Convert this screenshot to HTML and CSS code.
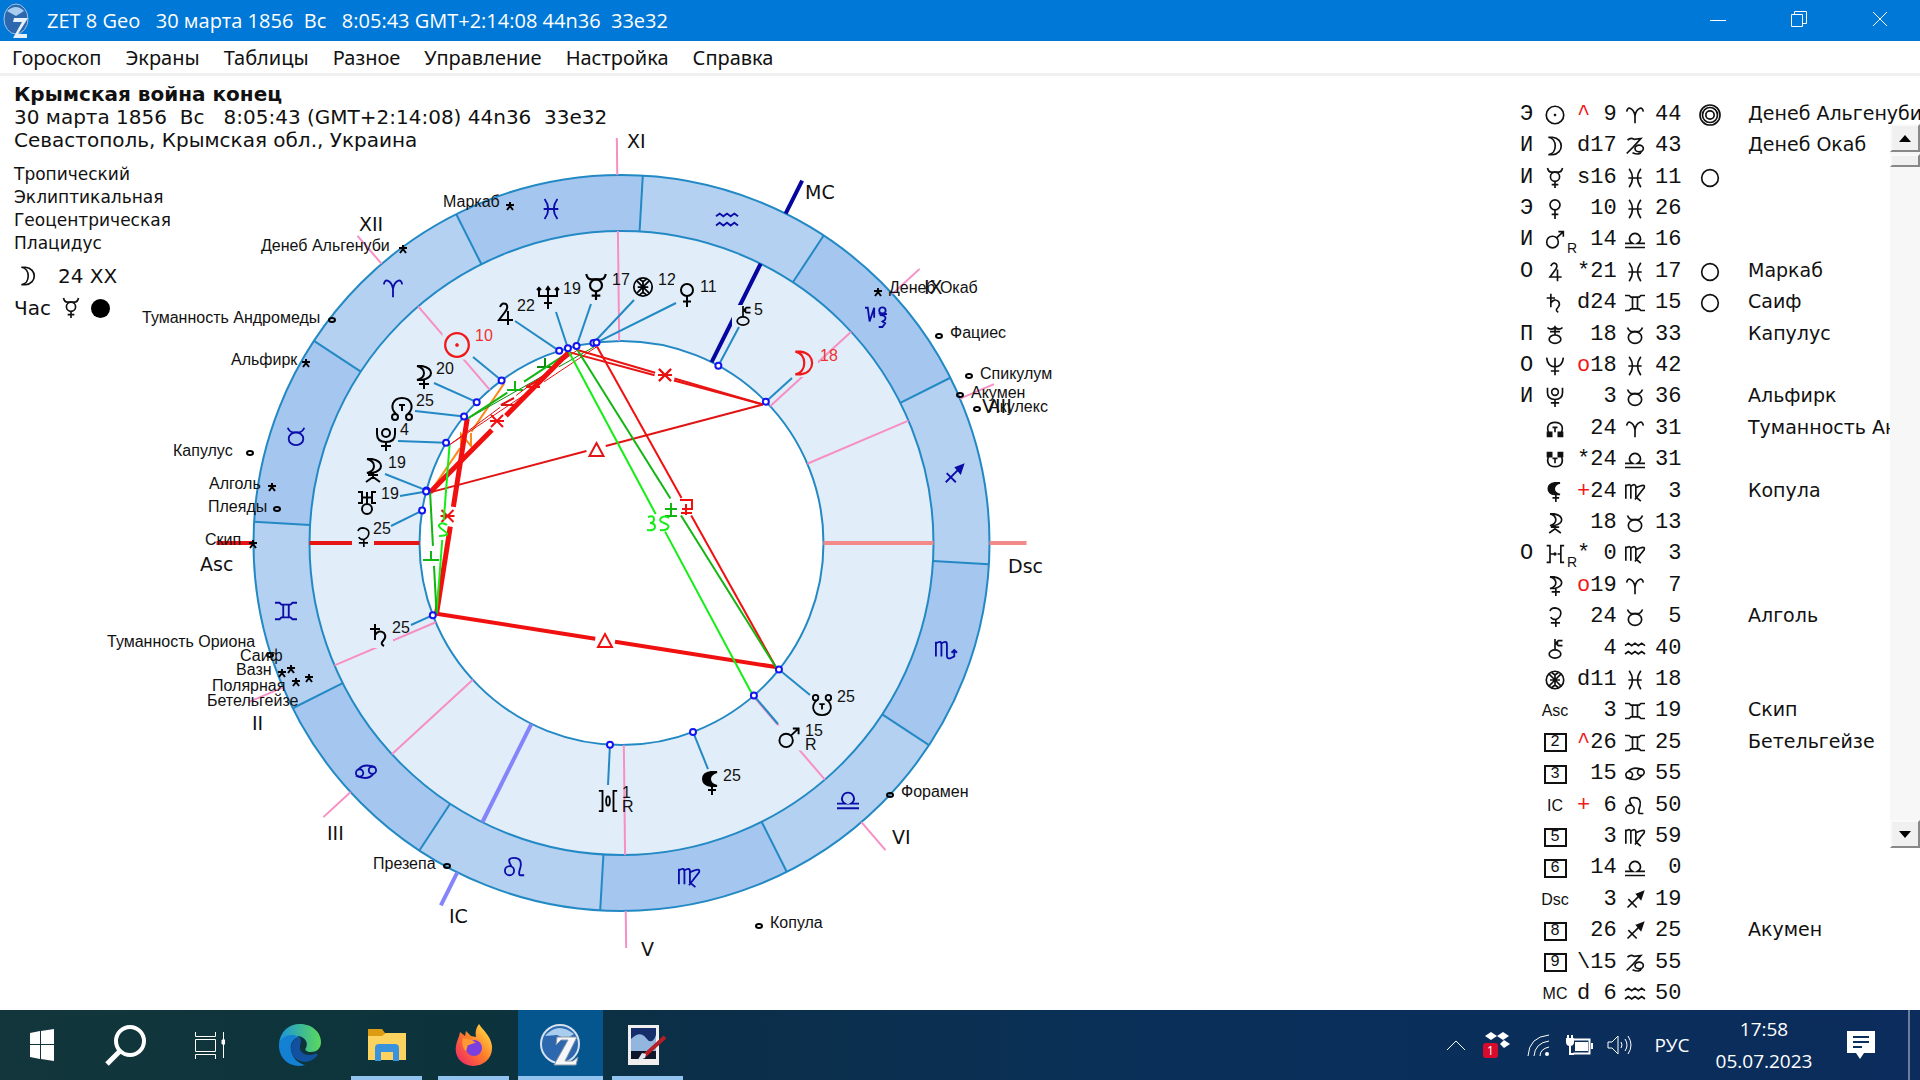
FILE: index.html
```html
<!DOCTYPE html>
<html lang="ru">
  <head>
    <meta charset="UTF-8" />
    <meta name="viewport" content="width=device-width, initial-scale=1.0" />
    <title>ZET 8 Geo</title>
    <link rel="stylesheet" href="styles.css">
  </head>
  <body>
    <!-- Glyphs used by the wheel and the table -->
    <svg class="sprite" aria-hidden="true">
      <symbol id="sun" viewBox="0 0 24 24"><circle cx="12" cy="12" r="10.5" /><path d="M12 10.5v3M10.5 12h3" /></symbol>
      <symbol id="moon" viewBox="0 0 24 24"><path d="M4 1.5h5C23 3 23 21 9 22.500H4C15 21 15 3 4 1.500z" /></symbol>
      <symbol id="mercury" viewBox="0 0 24 24"><path d="M3 0q1 5 5 5h8q4 0 5-5M12 16v8M8 20h8" /><circle cx="12" cy="10.500" r="5.500" /></symbol>
      <symbol id="venus" viewBox="0 0 24 24"><circle cx="12" cy="7" r="6" /><path d="M12 13v11M8 18.500h8" /></symbol>
      <symbol id="mars" viewBox="0 0 24 24"><circle cx="9" cy="14.500" r="7" /><path d="M14 9.500L22 2M16 2h6v6" /></symbol>
      <symbol id="jupiter" viewBox="0 0 24 24"><path d="M7 5q2-5 6-3 3 3-1 8l-6 8h14M15 9v14" /></symbol>
      <symbol id="saturn" viewBox="0 0 24 24"><path d="M7 1v16M2 6h10M7 12q4-6 9-2 3 4-1 8-3 3 1 5" /></symbol>
      <symbol id="uranus" viewBox="0 0 24 24"><path d="M3 1h4v11H3M21 1h-4v11h4M7 6.500h10M12 1v12" /><circle cx="12" cy="18" r="5" /></symbol>
      <symbol id="neptune" viewBox="0 0 24 24"><path d="M3 3v8h18V3M12 2v22M8 18h8M1 5l2-2 2 2M10 5l2-3 2 3M19 5l2-2 2 2" /></symbol>
      <symbol id="trident" viewBox="0 0 24 24"><path d="M2 2q1 11 10 11T22 2M12 2v21M7 18h10" /></symbol>
      <symbol id="ouranos" viewBox="0 0 24 24"><path d="M3 3q4 4 9 0 5 4 9 0M12 1v11M6 8h12" /><ellipse cx="12" cy="17" rx="7" ry="5" /></symbol>
      <symbol id="pluto" viewBox="0 0 24 24"><path d="M3 1v6q0 8 9 8t9-8V1M12 15v9M7 19h10" /><circle cx="12" cy="6" r="4" /></symbol>
      <symbol id="north" viewBox="0 0 24 24"><path d="M6 17C-1 10 3 1 12 1s13 9 6 16M9 8h6M12 8v6" /><circle cx="5" cy="20" r="3" /><circle cx="19" cy="20" r="3" /></symbol>
      <symbol id="south" viewBox="0 0 24 24"><path d="M6 7C-1 14 3 23 12 23s13-9 6-16M9 11h6M12 11v6" /><circle cx="5" cy="4" r="3" /><circle cx="19" cy="4" r="3" /></symbol>
      <symbol id="node-up" viewBox="0 0 24 24"><path d="M5 18C1 10 4 4 12 4s11 6 7 14M9 10h6M12 10v6" /><path class="solid" d="M3 16h5v5H3zM16 16h5v5h-5z" /></symbol>
      <symbol id="node-down" viewBox="0 0 24 24"><path d="M5 6C1 14 4 20 12 20s11-6 7-14M9 10h6M12 10v6" /><path class="solid" d="M3 3h5v5H3zM16 3h5v5h-5z" /></symbol>
      <symbol id="lilith" viewBox="0 0 24 24"><path class="solid" d="M18 1H12Q4 2 4 8t8 7h6Q11 13 11 8t7-7z" /><path d="M13 15v9M9 19h8" /></symbol>
      <symbol id="selena" viewBox="0 0 24 24"><path d="M6 1h5q9 2 9 7t-9 7H6q7-2 7-7T6 1M13 15v9M8 19h10" /></symbol>
      <symbol id="proserpina" viewBox="0 0 24 24"><path d="M6 1h5q9 2 9 7t-9 7H6q7-2 7-7T6 1M12 15v4M7 17h10M5 24l7-5 7 5" /></symbol>
      <symbol id="ceres" viewBox="0 0 24 24"><path d="M6 5q1-4 6-4 7 1 7 6 0 6-6 8-5 0-6-3M13 15v9M7 19h11" /></symbol>
      <symbol id="chiron" viewBox="0 0 24 24"><path d="M12 13V0M21 2h-5l-3 3 3 3h5M12 5h4" /><ellipse cx="12" cy="18" rx="7" ry="5" /></symbol>
      <symbol id="fortune" viewBox="0 0 24 24"><circle cx="12" cy="12" r="10.500" /><path d="M12 6v12M6 12h12M5 5l4 4 6 6 4 4M19 5l-4 4-6 6-4 4M8 3l4 3 4-3M8 21l4-3 4 3" /></symbol>
      <symbol id="vulcan" viewBox="0 0 24 24"><path d="M2 1h4v22H2M22 1h-4v22h4" /><ellipse cx="12" cy="12" rx="2" ry="5" /></symbol>
      <symbol id="hestia" viewBox="0 0 24 24"><path d="M2 2h4v20H2M6 12h5M15 12h4M23 2h-4v20h4" /><circle class="solid" cx="12" cy="12" r="1" /></symbol>

      <symbol id="aries" viewBox="0 0 24 24"><path d="M2 8q1-5 4-4 5 2 6 9v9M22 8q-1-5-4-4-5 2-6 9" /></symbol>
      <symbol id="taurus" viewBox="0 0 24 24"><path d="M3 3q2 5 6 5h6q4 0 6-5" /><ellipse cx="12" cy="15" rx="8" ry="7" /></symbol>
      <symbol id="gemini" viewBox="0 0 24 24"><path d="M0 3h5l2 2h10l2-2h5M0 21h5l2-2h10l2 2h5M9 5v14M15 5v14" /></symbol>
      <symbol id="cancer" viewBox="0 0 24 24"><circle cx="5" cy="13" r="4" /><circle cx="19" cy="10" r="4" /><path d="M4 9q6-7 18-2M20 14q-6 8-19 2" /></symbol>
      <symbol id="leo" viewBox="0 0 24 24"><circle cx="6" cy="16" r="5" /><path d="M8 11Q2 2 11 2t7 10q-3 9 0 9h4" /></symbol>
      <symbol id="virgo" viewBox="0 0 24 24"><path d="M1 3v17M1 5q6-4 6 1v14M7 5q6-4 6 1v12l6 5M13 7q12-6 10 0L12 21" /></symbol>
      <symbol id="libra" viewBox="0 0 24 24"><path d="M0 21h24M0 16h9q-5-3-3-8 2-4 6-4t6 4q2 5-3 8h9" /></symbol>
      <symbol id="scorpio" viewBox="0 0 24 24"><path d="M1 3v16M1 5q6-4 6 1v13M7 5q6-4 6 1v12q0 4 4 3l4-2v-7M18 15l3-3 3 3" /></symbol>
      <symbol id="sagittarius" viewBox="0 0 24 24"><path d="M3 21L20 4M4 11l10 10" /><path class="solid" d="M14 5l8-3-3 9z" /></symbol>
      <symbol id="capricorn" viewBox="0 0 24 24"><path d="M0 3h3l2 15L10 3v11M15 9l9 1M16 11q8 0 6 5l-3 2 3 2-3 4h-4" /><circle cx="19" cy="6" r="3.500" /></symbol>
      <symbol id="goat" viewBox="0 0 24 24"><path d="M3 5q4-4 8-1l8-1-9 10-8 8" /><ellipse cx="17" cy="15" rx="5" ry="4" /><path d="M9 20q9 4 11-2" /></symbol>
      <symbol id="aquarius" viewBox="0 0 24 24"><path d="M0 8l4-3 4 3 4-3 4 3 4-3 4 3M0 18l4-3 4 3 4-3 4 3 4-3 4 3" /></symbol>
      <symbol id="pisces" viewBox="0 0 24 24"><path d="M5 1q8 11 0 22M19 1q-8 11 0 22M4 12h16" /></symbol>
    </svg>

    <header class="titlebar">
      <svg class="app-icon" viewBox="0 0 28 36"><ellipse cx="14" cy="16" rx="12" ry="15" fill="#2d67ae" stroke="#9cc4ea" stroke-width="1" /><path d="M5 8q9-8 17 0l-8 5z" fill="#a9cdee" /><path d="M12 15h14L16 31h9v4H11l9-16h-9z" fill="#e8f0f8" /></svg>
      <h1>ZET 8 Geo   30 марта 1856  Вс   8:05:43 GMT+2:14:08 44n36  33e32</h1>
      <div class="window-buttons">
        <button aria-label="Свернуть"><svg viewBox="0 0 16 16"><path d="M0 9.500h16" /></svg></button>
        <button aria-label="Восстановить"><svg viewBox="0 0 16 16"><path d="M.5 3.500h11v12h-11zM3.500 3.500v-3h12v12h-4" /></svg></button>
        <button aria-label="Закрыть"><svg viewBox="0 0 16 16"><path d="M1 1l14 14M15 1L1 15" /></svg></button>
      </div>
    </header>

    <nav class="menu">
      <a href="#">Гороскоп</a>
      <a href="#">Экраны</a>
      <a href="#">Таблицы</a>
      <a href="#">Разное</a>
      <a href="#">Управление</a>
      <a href="#">Настройка</a>
      <a href="#">Справка</a>
    </nav>

    <main class="workspace">
      <section class="wheel">
        <svg id="chart" viewBox="0 76 1516 934" preserveAspectRatio="xMinYMin meet"></svg>
        <div class="info">
          <h2>Крымская война конец</h2>
          <p>30 марта 1856  Вс   8:05:43 (GMT+2:14:08) 44n36  33e32</p>
          <p>Севастополь, Крымская обл., Украина</p>
          <ul>
            <li>Тропический</li>
            <li>Эклиптикальная</li>
            <li>Геоцентрическая</li>
            <li>Плацидус</li>
          </ul>
          <div class="row"><svg class="glyph"><use href="#moon" /></svg><span class="day">24 XX</span></div>
          <div class="row"><span>Час</span><svg class="glyph"><use href="#mercury" /></svg><span class="dot"></span></div>
        </div>
      </section>

      <section class="positions">
        <table><tbody id="positions"></tbody></table>
        <div class="scrollbar">
          <button aria-label="Вверх"><span class="up"></span></button>
          <div class="thumb"></div>
          <button class="last" aria-label="Вниз"><span class="down"></span></button>
        </div>
      </section>
    </main>

    <footer class="taskbar">
      <div class="system">
        <button aria-label="Пуск"><svg width="26" height="34" viewBox="0 0 26 34" fill="#fff"><path d="M1 5l10-2v13H1zM12 3l13-2v15H12zM1 17h10v14L1 29zM12 17h13v16l-13-2z" /></svg></button>
        <button aria-label="Поиск"><svg width="42" height="42" viewBox="0 0 42 42" fill="none" stroke="#fff" stroke-width="4"><circle cx="25" cy="17" r="14" /><path d="M15 27L2 40" stroke-width="5" /></svg></button>
        <button aria-label="Представление задач"><svg width="30" height="30" viewBox="0 0 30 30" fill="none" stroke="#fff" stroke-width="1"><path d="M.5 2v4.500h20V2M.5 9.500h20v12H.5zM.5 29v-4.500h20V29M28.500 2v26" /><path d="M27 10h3v4h-3z" fill="#fff" /></svg></button>
      </div>
      <div class="apps">
        <button aria-label="Edge">
          <svg width="42" height="42" viewBox="0 0 42 42">
            <defs>
              <linearGradient id="edgeTop"><stop offset="0" stop-color="#1b94dc" /><stop offset="1" stop-color="#5bd95a" /></linearGradient>
            </defs>
            <path d="M0 20C1 7 10 0 21 0c13 0 21 9 21 18 0 7-5 10-10 10-4 0-7-2-5-4 3-6-2-12-9-12S2 14 0 20z" fill="url(#edgeTop)" />
            <path d="M0 20c3-9 13-11 20-7-7 2-9 8-8 13 1 7 6 13 14 15C12 45-1 35 0 20z" fill="#1480d4" />
            <path d="M20 13c-9 4-10 13-5 20 5 6 15 7 22 0 3-3 1-4-1-3-8 3-16-1-15-7 0-5 3-6-1-10z" fill="#12519f" />
          </svg>
        </button>
        <button class="open" aria-label="Проводник"><svg width="38" height="34" viewBox="0 0 38 34"><path d="M0 1h14l3 4h20v26H0z" fill="#dd9d12" /><path d="M0 8h14l4-3h20v27H0z" fill="#fbd35e" /><path d="M7 33V20q0-4 4-4h16q4 0 4 4v13h-6v-9H13v9z" fill="#3a92dc" /></svg></button>
        <button class="open" aria-label="Firefox">
          <svg width="38" height="42" viewBox="0 0 38 42">
            <defs>
              <linearGradient id="fox" x1="1" y1="0" x2="0" y2="1"><stop offset="0" stop-color="#fff04a" /><stop offset=".5" stop-color="#ff7a2a" /><stop offset="1" stop-color="#ee1c70" /></linearGradient>
            </defs>
            <path d="M24 0c3 5 12 12 13 22 1 12-8 20-19 20S-1 33 1 22C2 16 4 14 5 8l5 4 1-5 5 5 5 1c-1-5 0-9 3-13z" fill="url(#fox)" />
            <circle cx="19" cy="24" r="8" fill="#7b3fe0" />
            <path d="M8 14l9 2 4 3c-4 0-5 2-8 2l-2 6C7 24 7 18 8 14z" fill="#ff9a35" />
          </svg>
        </button>
        <button class="open active" aria-label="ZET 8"><svg width="42" height="42" viewBox="0 0 42 42"><circle cx="20" cy="20" r="19" fill="#2d67ae" stroke="#d5e2ee" stroke-width="2" /><path d="M5 12q13-15 29-2l-8 5-9-4z" fill="#a9cdee" /><path d="M17 13h20L25 37h8l5-4-2 8H14l14-25h-7l-5 5z" fill="#f5f7fa" stroke="#8795a5" stroke-width="1" /></svg></button>
        <button class="open" aria-label="Просмотр изображений"><svg width="42" height="42" viewBox="0 0 42 42"><path d="M1 1h31v40H1z" fill="#f1efed" /><path d="M4 4h25v31H4z" fill="#162f6c" /><path d="M4 15q9-9 15-1t10-3v16H4z" fill="#93b6df" /><path d="M4 27h25v8H4z" fill="#10162a" /><path d="M38 13L17 32" stroke="#b51f26" stroke-width="4" /><path d="M19 30l-4-1-5 8 8-3z" fill="#dfe5ee" /></svg></button>
      </div>

      <div class="tray">
        <button aria-label="Скрытые значки"><svg width="18" height="10" viewBox="0 0 18 10"><path d="M0 10l9-9 9 9" /></svg></button>
        <button class="cloud" aria-label="Dropbox"><svg width="26" height="26" viewBox="0 0 26 26"><path class="fill" d="M7 0l6 4-6 4-6-4zM19 0l6 4-6 4-6-4zM20 8l6 4-6 4-4-4z" /></svg><span class="count">1</span></button>
        <button aria-label="Сеть"><svg width="22" height="22" viewBox="0 0 22 22"><path d="M1 22Q2 3 22 1M7 22Q8 9 22 7M13 22Q13 15 22 13" /><circle class="fill" cx="20" cy="20" r="2" /></svg></button>
        <button aria-label="Питание"><svg width="28" height="22" viewBox="0 0 28 22"><path d="M8.500 5.500h16v14h-16M5 12v8h4" stroke-width="2" /><path class="fill" d="M10 8h13v9H10zM26 9h2v6h-2zM1 4h8v4q0 4-4 4T1 8zM2 1h2v4H2zM6 1h2v4H6z" /></svg></button>
        <button aria-label="Громкость"><svg width="26" height="22" viewBox="0 0 26 22"><path d="M1 8h4l6-6v18l-6-6H1zM14 8q2 3 0 6M18 5q4 6 0 12M21 2q6 9 0 18" /></svg></button>
        <button class="lang">РУС</button>
        <button class="clock"><span>17:58</span><span>05.07.2023</span></button>
        <button class="notes" aria-label="Уведомления"><svg width="28" height="28" viewBox="0 0 28 28"><path class="fill" d="M0 0h28v22H17l-4 6-4-6H0z" /><path d="M6 6h16M6 11h16M6 16h9" stroke="#0b2f5d" stroke-width="2" /></svg></button>
        <span class="desktop-edge"></span>
      </div>
    </footer>

    <script src="script.js"></script>
  </body>
</html>
```
FILE: styles.css
```css
* {
  box-sizing: border-box;
}
body {
  margin: 0;
  height: 100vh;
  display: flex;
  flex-direction: column;
  overflow: hidden;
  background-color: #fff;
  color: #111;
  font-family: "DejaVu Sans", Verdana, sans-serif;
}
h1, h2, p, ul {
  margin: 0;
  padding: 0;
  font-weight: normal;
}
button {
  border: 0;
  padding: 0;
  background: none;
  color: inherit;
  font: inherit;
}
.sprite {
  position: absolute;
  width: 0;
  height: 0;
}
symbol {
  overflow: visible;
}
.solid {
  fill: currentColor;
}

/* Title bar and menu */
.titlebar {
  height: 41px;
  flex: none;
  display: flex;
  align-items: center;
  background-color: #0078d7;
  color: #fff;
}
.app-icon {
  width: 28px;
  height: 36px;
  margin: 0 17px 0 2px;
}
.titlebar h1 {
  flex: 1;
  white-space: pre;
  font-family: "Open Sans", "Segoe UI", sans-serif;
  font-size: 20px;
}
.window-buttons {
  display: flex;
  height: 100%;
}
.window-buttons button {
  width: 81px;
}
.window-buttons svg {
  width: 16px;
  height: 16px;
  fill: none;
  stroke: #fff;
}
.menu {
  height: 35px;
  flex: none;
  display: flex;
  align-items: center;
  gap: 24px;
  padding-left: 12px;
  border-bottom: 3px solid #f0f0f0;
  font-family: "Noto Sans", "Segoe UI", sans-serif;
  font-size: 20px;
}
.menu a {
  color: #111;
  text-decoration: none;
}

/* Chart */
.workspace {
  flex: 1;
  min-height: 0;
  display: flex;
}
.wheel {
  position: relative;
  flex: 1;
  min-width: 0;
}
.wheel > svg {
  display: block;
  width: 100%;
  height: 100%;
}
.info {
  position: absolute;
  top: 7px;
  left: 14px;
  font-size: 20px;
  line-height: 23px;
}
.info h2 {
  font-size: 20px;
  font-weight: bold;
}
.info p {
  white-space: pre;
}
.info ul {
  margin-top: 11px;
  list-style: none;
  font-size: 17px;
}
.info .row {
  display: flex;
  align-items: center;
  gap: 10px;
  height: 32px;
}
.info .day {
  margin-left: 10px;
}
.info ul + .row {
  margin-top: 5px;
  padding-left: 4px;
}
.dot {
  width: 19px;
  height: 19px;
  border-radius: 50%;
  background-color: #000;
}
.glyph {
  width: 20px;
  height: 20px;
  fill: none;
  stroke: currentColor;
  stroke-width: 2;
  overflow: visible;
}

#chart {
  fill: none;
  stroke-width: 1;
}
#chart .ring, #chart .edge {
  stroke: #2389c4;
  stroke-width: 2;
}
#chart .sign-a { fill: #b4d1f1; }
#chart .sign-b { fill: #a5c7ef; }
#chart .belt { fill: #e1edf9; }
#chart .hole { fill: #fff; }
#chart .cusp { stroke: #f78fc4; stroke-width: 2; }
#chart .asc { stroke: #e81414; stroke-width: 4; }
#chart .dsc { stroke: #f28a8a; stroke-width: 4; }
#chart .mc { stroke: #0505a0; stroke-width: 4; }
#chart .ic { stroke: #8484fb; stroke-width: 4; }
#chart .leader { stroke: #2389c4; stroke-width: 2; }
#chart .mask { fill: #e1edf9; }
#chart .point { fill: #fff; stroke: #1414f0; stroke-width: 2; }
#chart .sign { color: #0c0ca8; stroke: #0c0ca8; stroke-width: 2; }
#chart .planet { color: #000; stroke: #000; stroke-width: 2; }
#chart .planet.hot { color: #f01818; stroke: #f01818; }
#chart .star { stroke: #000; stroke-width: 2; }
#chart text {
  fill: #111;
  stroke: none;
  font-family: "Liberation Sans", Arial, sans-serif;
  font-size: 16px;
}
#chart .house { font-family: "DejaVu Sans", Verdana, sans-serif; font-size: 19px; }
#chart .hot { fill: none; }
#chart .degree.hot { fill: #f03030; }

/* Table of positions */
.positions {
  position: relative;
  flex: none;
  width: 404px;
  padding-top: 23px;
  overflow: hidden;
}
.positions table {
  height: 100%;
  width: 404px;
  table-layout: fixed;
  border-collapse: collapse;
  white-space: pre;
  font-family: "Liberation Mono", "Courier New", monospace;
  font-size: 22px;
  line-height: 24px;
}
.positions td {
  padding: 0;
}
.positions .kind { width: 22px; padding-left: 4px; }
.positions .body { width: 39px; padding-right: 5px; text-align: center; }
.positions .deg { width: 41px; }
.positions .zod { width: 34px; text-align: center; }
.positions .min { width: 41px; padding-left: 3px; }
.positions .mark { width: 34px; text-align: center; }
.positions .name {
  padding-left: 21px;
  padding-bottom: 4px;
  font-family: "DejaVu Sans", Verdana, sans-serif;
  font-size: 19px;
  line-height: 20px;
}
.positions .glyph {
  display: block;
  margin: 0 auto;
}
.positions .zod .glyph {
  width: 22px;
}
.positions .body {
  position: relative;
}
.red {
  color: #f01818;
}
.retro {
  position: absolute;
  right: 0;
  bottom: 0;
  font-family: "Liberation Sans", Arial, sans-serif;
  font-size: 14px;
  line-height: 16px;
}
.box {
  display: block;
  width: 23px;
  margin: 0 auto;
  border: 2px solid #111;
  font-size: 16px;
  line-height: 15px;
}
.angle {
  font-family: "Liberation Sans", Arial, sans-serif;
  font-size: 16px;
}
.scrollbar {
  position: absolute;
  top: 48px;
  right: 0;
  width: 30px;
  height: 724px;
  display: flex;
  flex-direction: column;
  gap: 2px;
  background-color: #f7f7f7;
}
.scrollbar button, .thumb {
  height: 28px;
  display: flex;
  align-items: center;
  justify-content: center;
  background-color: #f0f0f0;
  border: 2px solid #fafafa;
  border-right-color: #888;
  border-bottom-color: #888;
}
.scrollbar .thumb {
  height: 13px;
}
.scrollbar .last {
  margin-top: auto;
}
.up, .down {
  border: 6px solid transparent;
}
.up {
  border-top: 0;
  border-bottom: 7px solid #000;
}
.down {
  border-bottom: 0;
  border-top: 7px solid #000;
}

/* Taskbar */
.taskbar {
  height: 70px;
  flex: none;
  display: flex;
  background: linear-gradient(90deg, #12363b, #0c333c 25%, #0b2f48 36%, #0a3059 60%, #0b2c5c);
  color: #fff;
  font-family: "Open Sans", "Segoe UI", sans-serif;
  font-size: 19px;
}
.system, .apps {
  display: flex;
}
.apps {
  gap: 2px;
  margin-left: 5px;
}
.system button, .apps button {
  width: 85px;
  display: flex;
  align-items: center;
  justify-content: center;
  position: relative;
}
.system button {
  width: 84px;
}
.apps .open::after {
  content: "";
  position: absolute;
  left: 7px;
  right: 7px;
  bottom: 0;
  height: 4px;
  background-color: #91c3ee;
}
.apps .active {
  background-color: #05568f;
}
.apps .active::after {
  left: 0;
  right: 0;
}
.tray {
  margin-left: auto;
  display: flex;
  align-items: center;
}
.tray button {
  width: 41px;
  display: flex;
  justify-content: center;
}
.tray svg {
  fill: none;
  stroke: #fff;
}
.tray .fill {
  fill: #fff;
  stroke: none;
}
.tray .cloud {
  position: relative;
}
.count {
  position: absolute;
  left: 7px;
  bottom: 0;
  width: 15px;
  border-radius: 3px;
  background-color: #d90b2c;
  font-size: 12px;
  line-height: 15px;
}
.tray .lang {
  width: 64px;
}
.tray .clock {
  width: 120px;
  flex-direction: column;
  align-items: center;
  line-height: 32px;
}
.tray .notes {
  width: 74px;
}
.desktop-edge {
  width: 12px;
  height: 100%;
  margin-left: 10px;
  border-left: 2px solid #6b7f9c;
}
```
FILE: script.js
```js
const CX = 621.5;
const CY = 543;
const OUTER = 368;
const BELT = 312;
const INNER = 202;
const ASC = 63.32;

const chart = document.getElementById("chart");

function add(tag, attrs, text) {
  const el = document.createElementNS("http://www.w3.org/2000/svg", tag);
  for (const key in attrs) el.setAttribute(key, attrs[key]);
  if (text) el.textContent = text;
  chart.appendChild(el);
  return el;
}

// Point on the wheel for an ecliptic longitude
function at(lon, r) {
  const a = ((180 + lon - ASC) * Math.PI) / 180;
  return [CX + r * Math.cos(a), CY - r * Math.sin(a)];
}

function line(cls, a, b, extra) {
  add("line", { class: cls, x1: a[0], y1: a[1], x2: b[0], y2: b[1], ...extra });
}

function glyph(cls, id, x, y, w, h) {
  add("use", { class: cls, href: "#" + id, x: x - w / 2, y: y - h / 2, width: w, height: h });
}

// Zodiac ring
const signs = ["aries", "taurus", "gemini", "cancer", "leo", "virgo", "libra",
  "scorpio", "sagittarius", "capricorn", "aquarius", "pisces"];
const signSpots = [[393, 288], [296, 436], [286, 611], [366, 772], [515, 867], [689, 877],
  [848, 800], [946, 650], [954, 474], [876, 316], [727, 220], [551, 209]];

signs.forEach((name, i) => {
  const p = at(i * 30, OUTER);
  const q = at(i * 30 + 30, OUTER);
  add("path", {
    class: i % 2 ? "sign-b" : "sign-a",
    d: `M${CX} ${CY}L${p}A${OUTER} ${OUTER} 0 0 0 ${q}z`
  });
});
add("circle", { class: "ring", cx: CX, cy: CY, r: OUTER });
add("circle", { class: "ring belt", cx: CX, cy: CY, r: BELT });
add("circle", { class: "ring hole", cx: CX, cy: CY, r: INNER });
signs.forEach((name, i) => {
  line("edge", at(i * 30, BELT), at(i * 30, OUTER));
  glyph("sign", name, ...signSpots[i], 24, 22);
});

// House cusps: longitude, class, label, label position
const cusps = [
  [63.32, "asc", "Asc", 200, 571],
  [86.42, "cusp", "II", 252, 730],
  [105.92, "cusp", "III", 327, 840],
  [126.83, "ic", "IC", 449, 923],
  [153.98, "cusp", "V", 641, 956],
  [194, "cusp", "VI", 892, 844],
  [243.32, "dsc", "Dsc", 1008, 573],
  [266.42, "cusp", "VIII", 982, 413],
  [285.92, "cusp", "IX", 924, 294],
  [306.83, "mc", "MC", 805, 199],
  [333.98, "cusp", "XI", 627, 148],
  [14, "cusp", "XII", 359, 231]
];
cusps.forEach(([lon, cls, label, x, y]) => {
  line(cls, at(lon, INNER), at(lon, BELT));
  line(cls, at(lon, OUTER), at(lon, 405));
  add("text", { class: "house", x, y }, label);
});

// Aspects: from, to, colour, width, symbol, symbol position
const aspects = [
  [9.73, 48.5, "#f98b1c", 2, "N", 466, 440],
  [24.52, 341.3, "#0a8a0a", 1, "T", 545, 363],
  [24.52, 348.7, "#12b512", 2, "T", 515, 386],
  [33.6, 346.18, "#d81414", 1, "L", 508, 401],
  [33.6, 340.43, "#e81414", 1, "L", 533, 383],
  [48.5, 348.7, "#f01010", 5, "*", 497, 421],
  [24.52, 84.25, "#f01010", 5, "*", 447.5, 516],
  [48.5, 287.72, "#e01414", 2, "D", 596.5, 450],
  [348.7, 287.72, "#e81414", 2, "*", 665, 375],
  [346.18, 287.72, "#e81414", 2, "*", 665, 375],
  [84.25, 204.52, "#f01010", 4, "D", 605, 641],
  [340.43, 204.52, "#f01010", 2, "Q", 686, 507],
  [346.18, 204.52, "#12b512", 2, "P", 671, 510],
  [348.7, 194.27, "#14ee14", 2, "3S", 660, 523],
  [33.6, 84.25, "#14ee14", 2, "S", 443, 530],
  [48.5, 84.25, "#12b512", 2, "T", 431, 556]
];
const shapes = {
  "*": "M-7 0H7M-6-6L6 6M6-6L-6 6",
  D: "M0-7L7 6H-7z",
  T: "M-8 4H8M0 4V-5",
  L: "M7 4H-7L6-3",
  N: "M-5 7V-6L5 6V-7",
  Q: "M-6-7H6V2H-4M0-3V8M-5 6H6",
  P: "M-6-1H6M0-7V5M-6 6H6",
  S: "M4-5Q0-8-3-6T0 0 3 5-4 6",
  "3S": "M-12-6q6-2 6 2t-4 4q5 0 5 4t-8 3M9-5q-5-3-8 0t3 5 4 5-8 2"
};
aspects.forEach(([from, to, color, width, mark, x, y]) => {
  const a = at(from, 198);
  const b = at(to, 198);
  const dx = b[0] - a[0];
  const dy = b[1] - a[1];
  const len = Math.hypot(dx, dy);
  const mid = ((x - a[0]) * dx + (y - a[1]) * dy) / len;
  const spot = d => [a[0] + (dx * d) / len, a[1] + (dy * d) / len];
  const style = { stroke: color, "stroke-width": width };
  line("", a, spot(mid - 10), style);
  line("", spot(mid + 10), b, style);
  add("path", { d: shapes[mark], transform: `translate(${x} ${y})`, stroke: color, "stroke-width": 2 });
});

// Planets: glyph, longitude, glyph position, degree, degree position, leader start
const planets = [
  ["sun", 9.73, 457, 345, "10", 475, 341, 473, 357, 27],
  ["selena", 19.12, 423, 377, "20", 436, 374, 434, 383],
  ["north", 24.52, 402, 409, "25", 416, 406, 415, 411],
  ["pluto", 33.6, 386, 439, "4", 400, 435, 398, 441],
  ["proserpina", 48.22, 373, 470, "19", 388, 468, 385, 474],
  ["uranus", 48.55, 367, 503, "19", 381, 499, 400, 496],
  ["ceres", 54.08, 363, 537, "25", 373, 534, 391, 526, 20],
  ["saturn", 84.25, 380, 635, "25", 392, 633, 411, 625],
  ["jupiter", 351.28, 505, 314, "22", 517, 311, 515, 321],
  ["neptune", 348.7, 548, 297, "19", 563, 294, 556, 312],
  ["mercury", 346.18, 596, 287, "17", 612, 285, 591, 304, 26],
  ["fortune", 341.3, 643, 287, "12", 658, 285, 634, 300, 21],
  ["venus", 340.43, 687, 295, "11", 700, 292, 676, 303],
  ["chiron", 304.67, 743, 316, "5", 754, 315, 739, 327, 20],
  ["moon", 287.72, 804, 363, "18", 820, 361, 792, 378, 26],
  ["south", 204.52, 822, 705, "25", 837, 702, 810, 695, 22],
  ["mars", 194.27, 789, 738, "15", 805, 736, 778, 724, 23],
  ["lilith", 174.05, 711, 783, "25", 723, 781, 708, 769],
  ["vulcan", 150.05, 608, 801, "1", 622, 798, 608, 785, 22]
];
planets.forEach(([id, lon, x, y, deg, tx, ty, lx, ly, size = 24]) => {
  const hot = id === "sun" || id === "moon" ? " hot" : "";
  add("rect", { class: "mask", x: x - size / 2 - 1, y: y - size / 2 - 1, width: size + 2, height: size + 2 });
  line("leader", [lx, ly], at(lon, INNER));
  glyph("planet" + hot, id, x, y, size, size);
  add("text", { class: "degree" + hot, x: tx, y: ty }, deg);
  if (id === "mars" || id === "vulcan") add("text", { x: tx, y: ty + 14 }, "R");
});
planets.forEach(([id, lon]) => {
  const p = at(lon, INNER);
  add("circle", { class: "point", cx: p[0], cy: p[1], r: 3 });
});

// Fixed stars: name, text position, marker position, marker kind
const stars = [
  ["Маркаб", 443, 207, 510, 206, "*"],
  ["Денеб Альгенуби", 261, 251, 403, 249, "*"],
  ["Туманность Андромеды", 142, 323, 332, 320, "o"],
  ["Альфирк", 231, 365, 306, 363, "*"],
  ["Капулус", 173, 456, 250, 453, "o"],
  ["Алголь", 209, 489, 272, 487, "*"],
  ["Плеяды", 208, 512, 277, 509, "o"],
  ["Скип", 205, 545, 253, 544, "*"],
  ["Туманность Ориона", 107, 647, 270, 655, "o"],
  ["Саиф", 240, 661, 282, 673, "*"],
  ["Вазн", 236, 675, 291, 669, "*"],
  ["Полярная", 212, 691, 296, 682, "*"],
  ["Бетельгейзе", 207, 706, 309, 678, "*"],
  ["Презепа", 373, 869, 447, 866, "o"],
  ["Копула", 770, 928, 759, 926, "o"],
  ["Форамен", 901, 797, 890, 795, "o"],
  ["Денеб Окаб", 889, 293, 878, 292, "*"],
  ["Фациес", 950, 338, 939, 336, "o"],
  ["Спикулум", 980, 379, 969, 376, "o"],
  ["Акумен", 971, 398, 960, 395, "o"],
  ["Акулекс", 989, 412, 977, 409, "o"]
];
stars.forEach(([name, x, y, mx, my, kind]) => {
  add("text", { x, y }, name);
  if (kind === "o") add("ellipse", { class: "star", cx: mx, cy: my, rx: 3, ry: 2 });
  else add("path", { class: "star", d: `M${mx} ${my - 4}v4M${mx - 4} ${my - 1}h8M${mx} ${my}l-3 4M${mx} ${my}l3 4` });
});

// Positions: kind, body, flag, degree, sign, minute, mark, star
const rows = [
  ["Э", "sun", "^", " 9", "aries", "44", "oo", "Денеб Альгенуби"],
  ["И", "moon", "d", "17", "goat", "43", "", "Денеб Окаб"],
  ["И", "mercury", "s", "16", "pisces", "11", "o", ""],
  ["Э", "venus", " ", "10", "pisces", "26", "", ""],
  ["И", "mars R", " ", "14", "libra", "16", "", ""],
  ["О", "jupiter", "*", "21", "pisces", "17", "o", "Маркаб"],
  ["", "saturn", "d", "24", "gemini", "15", "o", "Саиф"],
  ["П", "ouranos", " ", "18", "taurus", "33", "", "Капулус"],
  ["О", "trident", "o", "18", "pisces", "42", "", ""],
  ["И", "pluto", " ", " 3", "taurus", "36", "", "Альфирк"],
  ["", "node-up", " ", "24", "aries", "31", "", "Туманность Андромеды"],
  ["", "node-down", "*", "24", "libra", "31", "", ""],
  ["", "lilith", "+", "24", "virgo", " 3", "", "Копула"],
  ["", "proserpina", " ", "18", "taurus", "13", "", ""],
  ["О", "hestia R", "*", " 0", "virgo", " 3", "", ""],
  ["", "selena", "o", "19", "aries", " 7", "", ""],
  ["", "ceres", " ", "24", "taurus", " 5", "", "Алголь"],
  ["", "chiron", " ", " 4", "aquarius", "40", "", ""],
  ["", "fortune", "d", "11", "pisces", "18", "", ""],
  ["", "Asc", " ", " 3", "gemini", "19", "", "Скип"],
  ["", "2", "^", "26", "gemini", "25", "", "Бетельгейзе"],
  ["", "3", " ", "15", "cancer", "55", "", ""],
  ["", "IC", "+", " 6", "leo", "50", "", ""],
  ["", "5", " ", " 3", "virgo", "59", "", ""],
  ["", "6", " ", "14", "libra", " 0", "", ""],
  ["", "Dsc", " ", " 3", "sagittarius", "19", "", ""],
  ["", "8", " ", "26", "sagittarius", "25", "", "Акумен"],
  ["", "9", "\\", "15", "goat", "55", "", ""],
  ["", "MC", "d", " 6", "aquarius", "50", "", ""]
];
const use = id => `<svg class="glyph"><use href="#${id}"/></svg>`;
const marks = {
  o: '<svg class="glyph" viewBox="0 0 24 24"><circle cx="12" cy="12" r="10"/></svg>',
  oo: '<svg class="glyph" viewBox="0 0 24 24"><circle cx="12" cy="12" r="12"/><circle cx="12" cy="12" r="9"/><circle cx="12" cy="12" r="5"/></svg>'
};

function body(value) {
  if (/^\d$/.test(value)) return `<span class="box">${value}</span>`;
  if (/^[A-Z]/.test(value)) return `<span class="angle">${value}</span>`;
  const [id, retro] = value.split(" ");
  return use(id) + (retro ? `<span class="retro">${retro}</span>` : "");
}

document.getElementById("positions").innerHTML = rows
  .map(([kind, what, flag, deg, sign, min, mark, name]) => {
    const red = "^o+".includes(flag) ? ' class="red"' : "";
    return `<tr><td class="kind">${kind}</td><td class="body">${body(what)}</td>` +
      `<td class="deg"><span${red}>${flag}</span>${deg}</td><td class="zod">${use(sign)}</td>` +
      `<td class="min">${min}</td><td class="mark">${marks[mark] || ""}</td><td class="name">${name}</td></tr>`;
  })
  .join("");
```
